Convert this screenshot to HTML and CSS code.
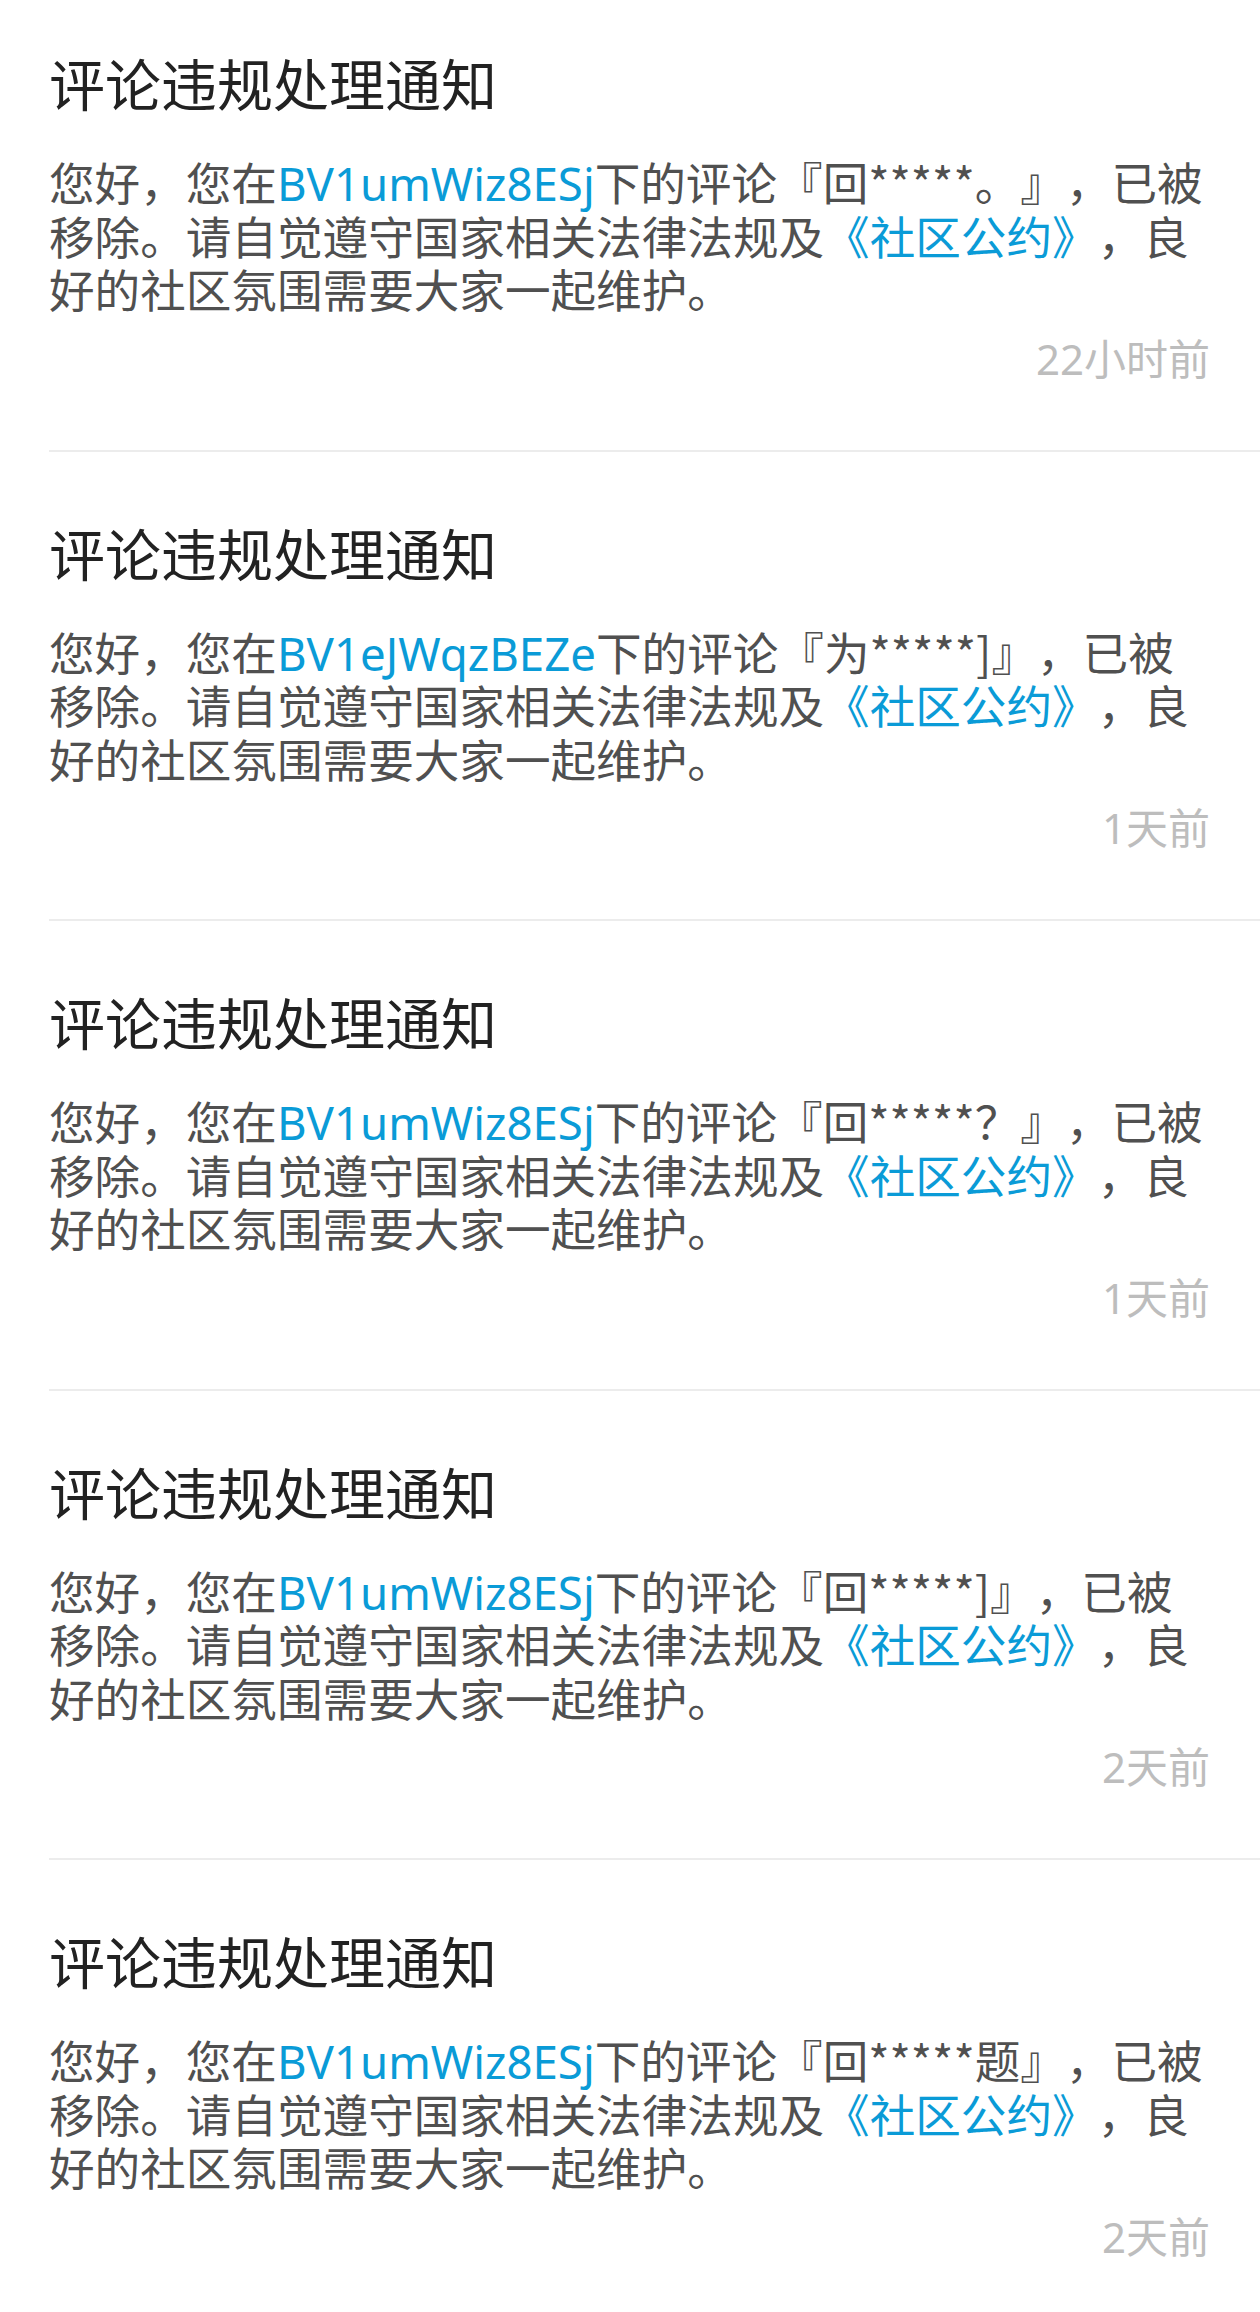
FILE: index.html
```html
<!DOCTYPE html>
<html lang="zh-CN">
<head>
<meta charset="utf-8">
<title>评论违规处理通知</title>
<link rel="stylesheet" href="styles.css">
</head>
<body>
<ul class="list">
  <li class="item">
    <h2 class="title">评论违规处理通知</h2>
    <p class="body">您好，您在<a class="link">BV1umWiz8ESj</a>下的评论『回<span class="mask">*****</span>。』，已被<br>移除。请自觉遵守国家相关法律法规及<a class="link">《社区公约》</a>，良<br>好的社区氛围需要大家一起维护。</p>
    <div class="time">22小时前</div>
  </li>
  <li class="item">
    <h2 class="title">评论违规处理通知</h2>
    <p class="body">您好，您在<a class="link">BV1eJWqzBEZe</a>下的评论『为<span class="mask">*****]</span>』，已被<br>移除。请自觉遵守国家相关法律法规及<a class="link">《社区公约》</a>，良<br>好的社区氛围需要大家一起维护。</p>
    <div class="time">1天前</div>
  </li>
  <li class="item">
    <h2 class="title">评论违规处理通知</h2>
    <p class="body">您好，您在<a class="link">BV1umWiz8ESj</a>下的评论『回<span class="mask">*****</span>？』，已被<br>移除。请自觉遵守国家相关法律法规及<a class="link">《社区公约》</a>，良<br>好的社区氛围需要大家一起维护。</p>
    <div class="time">1天前</div>
  </li>
  <li class="item">
    <h2 class="title">评论违规处理通知</h2>
    <p class="body">您好，您在<a class="link">BV1umWiz8ESj</a>下的评论『回<span class="mask">*****]</span>』，已被<br>移除。请自觉遵守国家相关法律法规及<a class="link">《社区公约》</a>，良<br>好的社区氛围需要大家一起维护。</p>
    <div class="time">2天前</div>
  </li>
  <li class="item">
    <h2 class="title">评论违规处理通知</h2>
    <p class="body">您好，您在<a class="link">BV1umWiz8ESj</a>下的评论『回<span class="mask">*****</span>题』，已被<br>移除。请自觉遵守国家相关法律法规及<a class="link">《社区公约》</a>，良<br>好的社区氛围需要大家一起维护。</p>
    <div class="time">2天前</div>
  </li>
</ul>
</body>
</html>
```
FILE: styles.css
```css
html, body {
  margin: 0;
  padding: 0;
  background: #ffffff;
}

body {
  font-family: "Noto Sans", "Noto Sans CJK SC", sans-serif;
  text-spacing-trim: space-all;
  overflow: hidden;
}

.list {
  list-style: none;
  margin: 0;
  padding: 0 0 0 49px;
}

.item {
  display: flex;
  flex-direction: column;
  padding: 74px 50px 70px 0;
  border-bottom: 2px solid #ececec;
}

.item:first-child {
  padding-top: 56px;
}

.title {
  margin: 0;
  font-size: 56px;
  line-height: 56px;
  font-weight: 400;
  color: #222222;
  white-space: nowrap;
}

.body {
  margin: 45px 0 0;
  font-size: 45.6px;
  line-height: 53.5px;
  color: #505050;
  white-space: nowrap;
}

.mask {
  font-family: "Noto Sans CJK SC", sans-serif;
  line-height: 0;
}

.link {
  color: #0a9bd7;
  text-decoration: none;
}

.time {
  margin-top: 20px;
  align-self: flex-end;
  font-size: 42px;
  line-height: 42px;
  color: #bdbdbd;
}
```
